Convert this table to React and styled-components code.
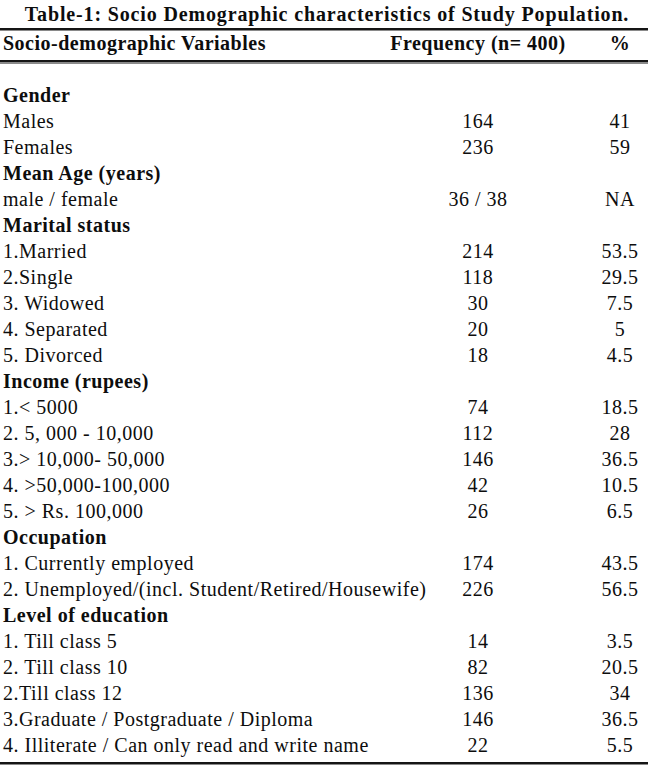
import React from "react";
import styled, { createGlobalStyle } from "styled-components";

const Global = createGlobalStyle`
  html, body { margin: 0; padding: 0; background: #fff; }
  body { font-family: "Liberation Serif", "Times New Roman", serif; color: #0d0d0d; }
`;

const Page = styled.div`
  width: 648px;
  display: flex;
  flex-direction: column;
`;

const Title = styled.div`
  font-weight: 700;
  font-size: 20px;
  line-height: 28px;
  letter-spacing: 0.85px;
  text-align: center;
  padding-left: 6px;
`;

const Rule = styled.div`
  height: ${(p) => p.$h}px;
  background: linear-gradient(#151515 0 ${(p) => p.$dark}px, #8a8a8a ${(p) => p.$dark}px 100%);
`;

const Row = styled.div`
  display: grid;
  grid-template-columns: 385px 180px 1fr;
  padding-left: 3px;
  font-size: 20px;
  line-height: ${(p) => (p.$head ? "22px" : "26px")};
  font-weight: ${(p) => (p.$bold ? 700 : 400)};
  letter-spacing: 0.5px;
  white-space: nowrap;
`;

const HeadRow = styled(Row)`
  padding-top: 1px;
  padding-bottom: 6px;
`;

const Label = styled.span``;

const Freq = styled.span`
  text-align: center;
`;

const Pct = styled.span`
  text-align: center;
  padding-left: 24px;
`;

const Body = styled.div`
  padding-top: 18px;
  padding-bottom: 4px;
  display: flex;
  flex-direction: column;
`;

const rows = [
  { h: "Gender" },
  ["Males", "164", "41"],
  ["Females", "236", "59"],
  { h: "Mean Age (years)" },
  ["male / female", "36 / 38", "NA"],
  { h: "Marital status" },
  ["1.Married", "214", "53.5"],
  ["2.Single", "118", "29.5"],
  ["3. Widowed", "30", "7.5"],
  ["4. Separated", "20", "5"],
  ["5. Divorced", "18", "4.5"],
  { h: "Income (rupees)" },
  ["1.< 5000", "74", "18.5"],
  ["2. 5, 000 - 10,000", "112", "28"],
  ["3.> 10,000- 50,000", "146", "36.5"],
  ["4. >50,000-100,000", "42", "10.5"],
  ["5. > Rs. 100,000", "26", "6.5"],
  { h: "Occupation" },
  ["1. Currently employed", "174", "43.5"],
  ["2. Unemployed/(incl. Student/Retired/Housewife)", "226", "56.5"],
  { h: "Level of education" },
  ["1. Till class 5", "14", "3.5"],
  ["2. Till class 10", "82", "20.5"],
  ["2.Till class 12", "136", "34"],
  ["3.Graduate / Postgraduate / Diploma", "146", "36.5"],
  ["4. Illiterate / Can only read and write name", "22", "5.5"],
];

export default function App() {
  return (
    <>
      <Global />
      <Page>
        <Title>Table-1: Socio Demographic characteristics of Study Population.</Title>
        <Rule $h={3} $dark={2} />
        <HeadRow $bold $head>
          <Label>Socio-demographic Variables</Label>
          <Freq>Frequency (n= 400)</Freq>
          <Pct>%</Pct>
        </HeadRow>
        <Rule $h={4} $dark={2} />
        <Body>
          {rows.map((r, i) =>
            Array.isArray(r) ? (
              <Row key={i}>
                <Label>{r[0]}</Label>
                <Freq>{r[1]}</Freq>
                <Pct>{r[2]}</Pct>
              </Row>
            ) : (
              <Row key={i} $bold>
                <Label>{r.h}</Label>
                <Freq />
                <Pct />
              </Row>
            )
          )}
        </Body>
        <Rule $h={3} $dark={2} />
      </Page>
    </>
  );
}
